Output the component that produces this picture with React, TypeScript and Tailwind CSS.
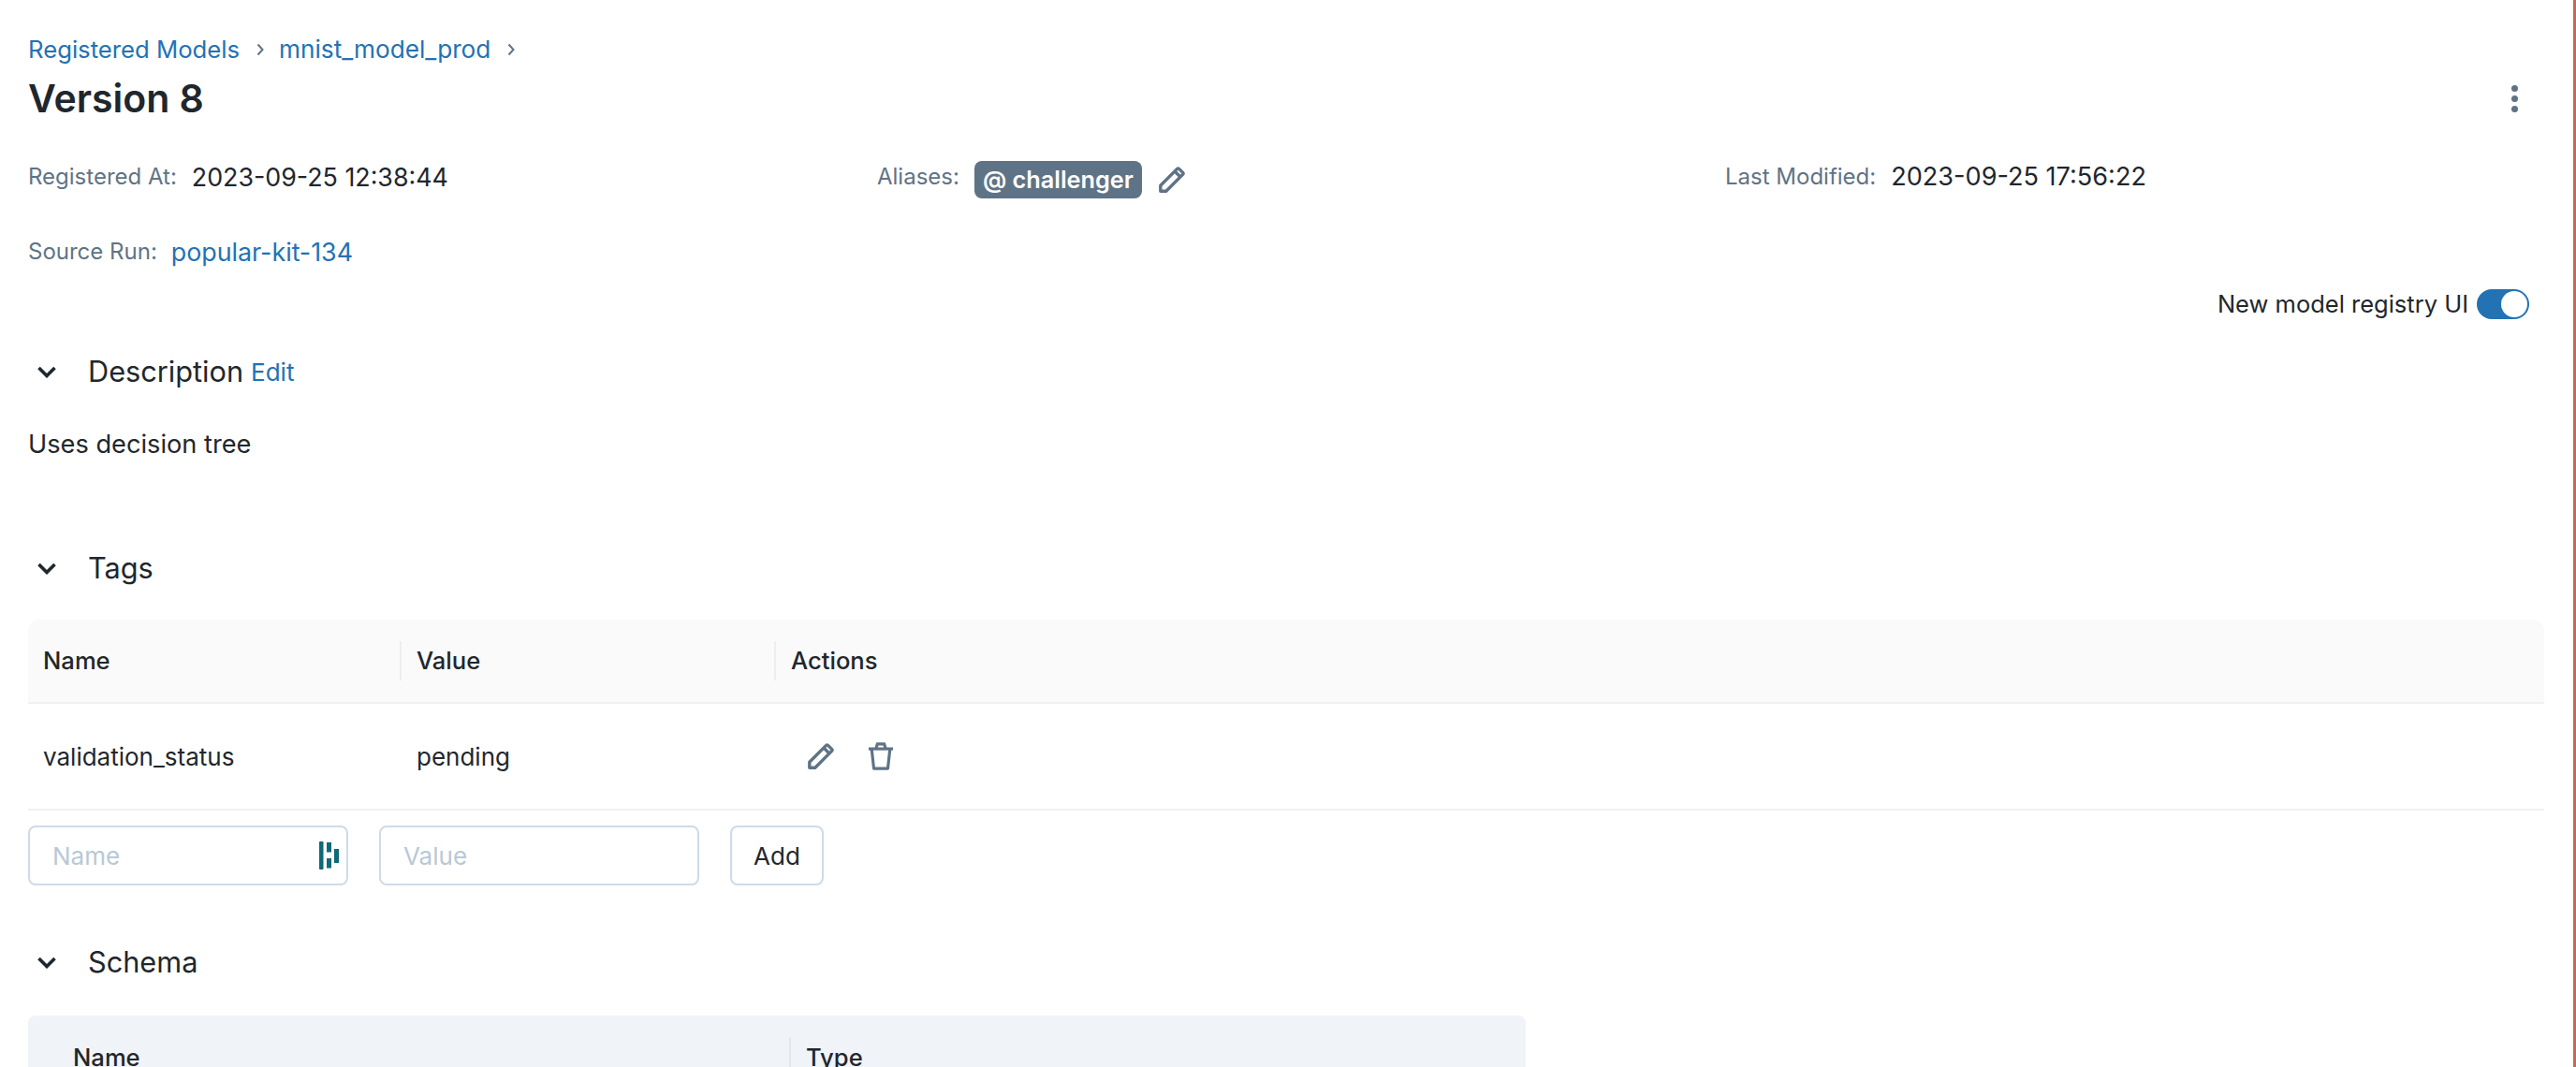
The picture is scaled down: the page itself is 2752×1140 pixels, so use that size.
import React from "react";

const Pencil = ({ className }: { className?: string }) => (
  <svg viewBox="0 0 28 28" fill="none" stroke="#5f7386" strokeWidth="3.4" strokeLinejoin="round" className={className}>
    <path d="M1.8 20.2 L19.6 2.4 Q20.6 1.5 21.6 2.4 L25.6 6.4 Q26.5 7.4 25.6 8.4 L7.8 26.2 H1.8 Z" />
    <path d="M17 5 L23 11" />
  </svg>
);

const Trash = ({ className }: { className?: string }) => (
  <svg viewBox="0 0 30 32" fill="none" stroke="#5f7386" strokeWidth="3.4" strokeLinejoin="round" className={className}>
    <path d="M1 7.5 H29" />
    <path d="M4.5 7.5 L7 30 H23 L25.5 7.5" />
    <path d="M9.5 7.5 L11 2 H19 L20.5 7.5" />
  </svg>
);

const Chevron = () => (
  <svg viewBox="0 0 20 13" fill="none" stroke="#1f272d" strokeWidth="3.6" className="w-5 h-[13px]">
    <path d="M1.5 2 L10 10.5 L18.5 2" />
  </svg>
);

const Crumb = () => (
  <svg viewBox="0 0 8 14" fill="none" stroke="#5f7386" strokeWidth="2" className="w-2 h-3.5">
    <path d="M1.5 1.5 L6.5 7 L1.5 12.5" />
  </svg>
);

const SectionHead = ({ title, children, className }: { title: string; children?: React.ReactNode; className?: string }) => (
  <div className={`flex items-center h-10 pl-[10px] ${className ?? ""}`}>
    <Chevron />
    <h2 className="ml-[34px] text-[30.7px] leading-10 text-[#1f272d]">{title}</h2>
    {children}
  </div>
);

const Meta = ({ label, children }: { label: string; children: React.ReactNode }) => (
  <div className="flex items-center h-10">
    <span className="text-[24px] text-[#5f7386]">{label}</span>
    {children}
  </div>
);

export default function App() {
  return (
    <div className="w-[2752px] h-[1140px] overflow-hidden bg-white border-r-[3px] border-[#c8694e] antialiased text-[#1f272d] text-[26.8px] [font-family:Inter,'Noto_Sans',sans-serif]">
      <div className="pl-[30px] pr-[31px]">
        <nav className="flex items-center h-8 mt-[37px] pt-0 text-[#2272b4] text-[25.7px]">
          <a>Registered Models</a>
          <span className="ml-[18px] mr-[16px] flex"><Crumb /></span>
          <a className="text-[26.2px]">mnist_model_prod</a>
          <span className="ml-[18px] flex"><Crumb /></span>
        </nav>

        <div className="flex items-center justify-between h-14 mt-[8px] pr-[28px]">
          <h1 className="text-[41px] leading-14 font-semibold">Version 8</h1>
          <div className="flex flex-col gap-1 items-center">
            <span className="w-[7px] h-[7px] rounded-full bg-[#5f7386]" />
            <span className="w-[7px] h-[7px] rounded-full bg-[#5f7386]" />
            <span className="w-[7px] h-[7px] rounded-full bg-[#5f7386]" />
          </div>
        </div>

        <div className="grid grid-cols-[907px_906px_1fr] h-10 items-center mt-[36px]">
          <Meta label="Registered At:">
            <span className="ml-4">2023-09-25 12:38:44</span>
          </Meta>
          <Meta label="Aliases:">
            <span className="ml-4 mt-[6px] h-10 px-[9px] rounded-lg bg-[#5f7386] text-white text-[25.3px] font-semibold flex items-center">@ challenger</span>
            <Pencil className="ml-[18px] mt-[6px] w-7 h-7" />
          </Meta>
          <Meta label="Last Modified:">
            <span className="ml-4 text-[27.1px]">2023-09-25 17:56:22</span>
          </Meta>
        </div>

        <div className="flex items-center h-10 mt-10">
          <Meta label="Source Run:">
            <a className="ml-[15px] text-[#2272b4]">popular-kit-134</a>
          </Meta>
        </div>

        <div className="flex items-center justify-end h-8 mt-[20px] pr-[16px]">
          <span className="text-[25.5px]">New model registry UI</span>
          <span className="ml-[9px] w-14 h-8 rounded-full bg-[#2272b4] flex items-center justify-end pr-[2px]">
            <span className="w-7 h-7 rounded-full bg-white" />
          </span>
        </div>

        <SectionHead title="Description" className="mt-[36px]">
          <a className="ml-[8px] text-[#2272b4] text-[26px]">Edit</a>
        </SectionHead>

        <p className="mt-[40px] h-9 leading-9 text-[#1f272d] text-[27.2px]">Uses decision tree</p>

        <SectionHead title="Tags" className="mt-[94px]" />

        <div className="mt-[35px]">
          <div className="h-[90px] flex items-center rounded-t-xl bg-[#fafafa] border-b-2 border-[#f0f0f0] font-medium text-[25.6px]">
            <div className="w-[399px] h-[42px] flex items-center pl-4 border-r-2 border-[#eeeeee]">Name</div>
            <div className="w-[400px] h-[42px] flex items-center pl-4 border-r-2 border-[#eeeeee]">Value</div>
            <div className="h-[42px] flex items-center pl-4">Actions</div>
          </div>
          <div className="h-[114px] flex items-center border-b-2 border-[#f0f0f0] text-[26px]">
            <div className="w-[399px] pl-4">validation_status</div>
            <div className="w-[400px] pl-4">pending</div>
            <div className="flex items-center pl-[34px]">
              <Pencil className="w-7 h-7" />
              <Trash className="ml-9 w-[28px] h-[32px]" />
            </div>
          </div>
        </div>

        <div className="flex items-center mt-4 text-[26px]">
          <div className="w-[342px] h-16 rounded-lg border-2 border-[#cddbe8] flex items-center pl-6 pr-2 justify-between text-[#b9c8d6]">
            <span>Name</span>
            <svg viewBox="0 0 21 30" className="w-[21px] h-[30px]" fill="#0e6a78">
              <rect x="0" y="0" width="4.5" height="30" rx="1" />
              <rect x="8" y="1" width="5" height="10.5" />
              <rect x="8" y="18" width="5" height="10.5" />
              <rect x="16" y="8" width="5" height="15" />
            </svg>
          </div>
          <div className="ml-[33px] w-[342px] h-16 rounded-lg border-2 border-[#cddbe8] flex items-center pl-6 text-[#b9c8d6]">
            <span>Value</span>
          </div>
          <button className="ml-[33px] w-[100px] h-16 rounded-lg border-2 border-[#cddbe8] flex items-center justify-center">Add</button>
        </div>

        <SectionHead title="Schema" className="mt-[62px]" />

        <div className="mt-[37px] w-[1600px] h-[80px] rounded-t-lg bg-[#f0f3f7] flex items-start pt-6 font-medium text-[25.6px]">
          <div className="w-[815px] h-[42px] flex items-center pl-12 border-r-2 border-[#e2e7ec]">Name</div>
          <div className="h-[42px] flex items-center pl-4">Type</div>
        </div>
      </div>
    </div>
  );
}
